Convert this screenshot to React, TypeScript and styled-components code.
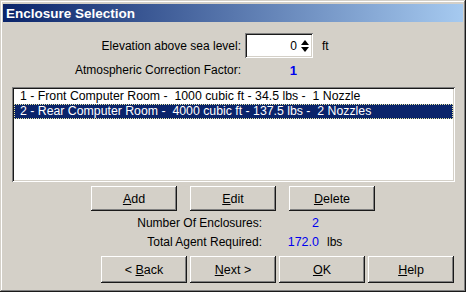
import React from 'react'
import styled, { createGlobalStyle } from 'styled-components'

const GlobalStyle = createGlobalStyle`
    body {
        margin: 0;
        background: #ffffff;
        font-family: "Liberation Sans", Arial, sans-serif;
        font-size: 12px;
        color: #000000;
    }
`

const Window = styled.div`
    width: 466px;
    height: 292px;
    box-sizing: border-box;
    background: #d4d0c8;
    padding: 4px 3px 3px 3px;
    display: flex;
    flex-direction: column;
    box-shadow:
        inset -1px -1px #1a1a1a,
        inset 1px 1px #d4d0c8,
        inset -2px -2px #808080,
        inset 2px 2px #ffffff;
`

const TitleBar = styled.div`
    height: 18px;
    flex: none;
    display: flex;
    align-items: center;
    padding-left: 3px;
    background: linear-gradient(to right, #0a246a, #a6caf0);
    color: #ffffff;
    font-weight: bold;
    font-size: 13.5px;
`

const FieldRow = styled.div<{ $labelWidth: number; $top: number; $height: number }>`
    display: flex;
    align-items: center;
    margin-top: ${props => props.$top}px;
    height: ${props => props.$height}px;

    & > label {
        width: ${props => props.$labelWidth}px;
        text-align: right;
        flex: none;
    }
`

const SpinBox = styled.div`
    width: 68px;
    height: 25px;
    box-sizing: border-box;
    margin-left: 4px;
    background: #ffffff;
    display: flex;
    align-items: center;
    justify-content: flex-end;
    gap: 4px;
    padding-right: 4px;
    box-shadow:
        inset 1px 1px #808080,
        inset -1px -1px #ffffff,
        inset 2px 2px #1a1a1a,
        inset -2px -2px #d4d0c8;
`

const Unit = styled.span<{ $gap: number }>`
    margin-left: ${props => props.$gap}px;
`

const Value = styled.span<{ $width: number; $bold?: boolean }>`
    width: ${props => props.$width}px;
    flex: none;
    text-align: right;
    color: #0000ee;
    font-weight: ${props => (props.$bold ? 'bold' : 'normal')};
    font-size: ${props => (props.$bold ? '13px' : '12.5px')};
`

const ListBox = styled.div`
    margin: 9px 0 0 9px;
    width: 443px;
    height: 95px;
    box-sizing: border-box;
    background: #ffffff;
    padding: 2px;
    box-shadow:
        inset 1px 1px #808080,
        inset -1px -1px #ffffff,
        inset 2px 2px #1a1a1a,
        inset -2px -2px #d4d0c8;
`

const ListItem = styled.div<{ $selected?: boolean }>`
    height: 15px;
    line-height: 15px;
    padding-left: 6px;
    white-space: pre;
    font-size: 12.3px;
    background: ${props => (props.$selected ? '#0a246a' : 'transparent')};
    color: ${props => (props.$selected ? '#ffffff' : '#000000')};
    outline: ${props => (props.$selected ? '1px dotted #e8e8a0' : 'none')};
    outline-offset: -1px;
`

const ButtonRow = styled.div<{ $top: number; $left: number; $gap: number }>`
    display: flex;
    margin-top: ${props => props.$top}px;
    padding-left: ${props => props.$left}px;
    gap: ${props => props.$gap}px;
`

const Button = styled.button<{ $height: number }>`
    width: 86px;
    height: ${props => props.$height}px;
    border: none;
    padding: 0;
    background: #d4d0c8;
    font-family: inherit;
    font-size: 12.5px;
    color: #000000;
    box-shadow:
        inset -1px -1px #1a1a1a,
        inset 1px 1px #ffffff,
        inset -2px -2px #808080,
        inset 2px 2px #d4d0c8;

    & u {
        text-decoration: underline;
    }
`

const SpinArrows = () => (
    <svg width="8" height="12" viewBox="0 0 8 12">
        <polygon points="4,0 8,5 0,5" fill="#000" />
        <polygon points="0,7 8,7 4,12" fill="#000" />
    </svg>
)

const enclosures = [
    '1 - Front Computer Room -  1000 cubic ft - 34.5 lbs -  1 Nozzle',
    '2 - Rear Computer Room -  4000 cubic ft - 137.5 lbs -  2 Nozzles',
]

const App: React.FC = () => {
    return (
        <>
            <GlobalStyle />
            <Window>
                <TitleBar>Enclosure Selection</TitleBar>

                <FieldRow $labelWidth={238} $top={11} $height={25}>
                    <label>Elevation above sea level:</label>
                    <SpinBox>
                        <span>0</span>
                        <SpinArrows />
                    </SpinBox>
                    <Unit $gap={9}>ft</Unit>
                </FieldRow>
                <FieldRow $labelWidth={238} $top={4} $height={16}>
                    <label>Atmospheric Correction Factor:</label>
                    <Value $width={56} $bold>1</Value>
                </FieldRow>

                <ListBox>
                    {enclosures.map((e, i) => (
                        <ListItem key={e} $selected={i === 1}>{e}</ListItem>
                    ))}
                </ListBox>

                <ButtonRow $top={4} $left={88} $gap={13}>
                    <Button $height={25}><u>A</u>dd</Button>
                    <Button $height={25}><u>E</u>dit</Button>
                    <Button $height={25}><u>D</u>elete</Button>
                </ButtonRow>

                <FieldRow $labelWidth={259} $top={4} $height={15}>
                    <label>Number Of Enclosures:</label>
                    <Value $width={57}>2</Value>
                </FieldRow>
                <FieldRow $labelWidth={259} $top={4} $height={15}>
                    <label>Total Agent Required:</label>
                    <Value $width={57}>172.0</Value>
                    <Unit $gap={8}>lbs</Unit>
                </FieldRow>

                <ButtonRow $top={7} $left={98} $gap={3}>
                    <Button $height={27}>&lt; <u>B</u>ack</Button>
                    <Button $height={27}><u>N</u>ext &gt;</Button>
                    <Button $height={27}><u>O</u>K</Button>
                    <Button $height={27}><u>H</u>elp</Button>
                </ButtonRow>
            </Window>
        </>
    )
}

export default App
